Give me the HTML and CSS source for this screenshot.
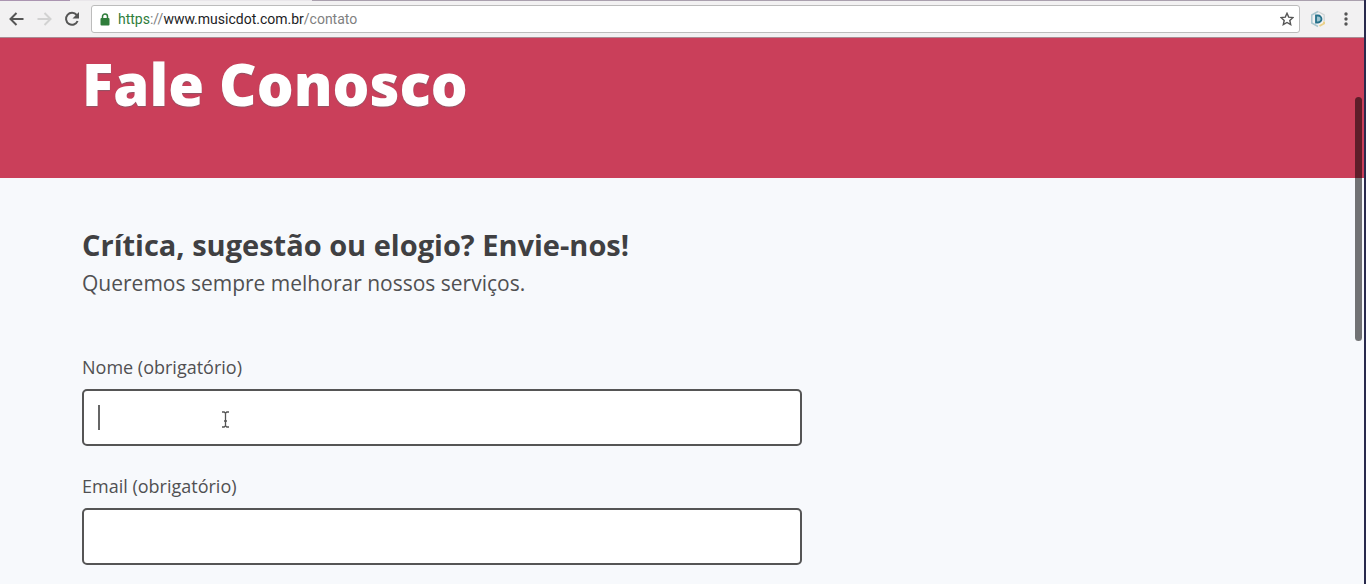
FILE: index.html
```html
<!DOCTYPE html>
<html lang="pt-BR">
<head>
<meta charset="utf-8">
<title>Fale Conosco</title>
<link rel="stylesheet" href="styles.css">
</head>
<body>
<div class="window">
  <div class="tabs"></div>
  <nav class="toolbar" aria-label="Navegador">
    <button class="tool" aria-label="Voltar"><svg width="16" height="16" viewBox="0 0 16 16"><path d="M15.500 8H2.500M8.500 2l-6 6 6 6" fill="none" stroke="#555" stroke-width="2"/></svg></button>
    <button class="tool" aria-label="Avançar" disabled><svg width="16" height="16" viewBox="0 0 16 16"><path d="M1.500 8h13M8.500 2l6 6-6 6" fill="none" stroke="#d2d2d2" stroke-width="2"/></svg></button>
    <button class="tool" aria-label="Recarregar"><svg width="16" height="16" viewBox="0 0 16 16"><path d="M12.700 4A6 6 0 1 0 13.600 10" fill="none" stroke="#555" stroke-width="2"/><path d="M15 1v6.500H8.500z" fill="#555"/></svg></button>
    <div class="address">
      <svg class="lock" width="10" height="13" viewBox="0 0 10 13"><rect x="0.500" y="5" width="9" height="7.500" rx="1" fill="#2f7d3b"/><path d="M2.500 5.500V3.500a2.500 2.500 0 0 1 5 0v2" fill="none" stroke="#2f7d3b" stroke-width="1.500"/></svg>
      <div class="url" role="textbox" aria-label="Endereço" contenteditable="true" spellcheck="false"><span class="scheme">https</span><span class="dim">://</span>www.musicdot.com.br<span class="dim">/contato</span></div>
      <button class="star" aria-label="Favoritar"><svg width="14" height="14" viewBox="0 0 14 14"><path d="M7 1.300l1.700 3.800 4.300.4-3.200 2.900.9 4.200L7 10.500l-3.700 2.100.9-4.200L1 5.500l4.300-.4z" fill="none" stroke="#555" stroke-width="1.400"/></svg></button>
    </div>
    <button class="tool" aria-label="Extensão"><svg width="16" height="18" viewBox="0 0 16 18"><path d="M8 1.500L1.800 5v8L8 16.500" fill="none" stroke="#a9c6ce" stroke-width="1.500"/><path d="M8 1.500L14.200 5v6" fill="none" stroke="#cfd5d6" stroke-width="1.300"/><path d="M14 11.500v2L9.500 16" fill="none" stroke="#ead18a" stroke-width="2"/><path d="M6 5.500h2a3.500 3.500 0 0 1 0 7H6z" fill="#9cc4cf" stroke="#25708a" stroke-width="1.800"/></svg></button>
    <button class="tool" aria-label="Menu"><svg width="16" height="16" viewBox="0 0 16 16" fill="#555"><circle cx="8" cy="3" r="1.700"/><circle cx="8" cy="8" r="1.700"/><circle cx="8" cy="13" r="1.700"/></svg></button>
  </nav>
  <header class="hero"><div class="container"><h1>Fale Conosco</h1></div></header>
  <main class="container content">
    <h2>Crítica, sugestão ou elogio? Envie-nos!</h2>
    <p class="lead">Queremos sempre melhorar nossos serviços.</p>
    <form class="form">
      <div class="field">
        <label for="nome">Nome (obrigatório)</label>
        <div class="control">
          <input id="nome" type="text" required>
          <span class="caret"></span>
          <svg class="pointer" width="9" height="17" viewBox="0 0 9 17"><path d="M1 1h2.200L4.500 2.300 5.800 1H8M4.500 2.300v12.400M1 16h2.200l1.300-1.300L5.800 16H8M3 10h3" fill="none" stroke="#555" stroke-width="1.300"/></svg>
        </div>
      </div>
      <div class="field">
        <label for="email">Email (obrigatório)</label>
        <div class="control"><input id="email" type="email" required></div>
      </div>
    </form>
  </main>
  <div class="scroll-thumb"></div>
</div>
</body>
</html>
```
FILE: styles.css
```css
* { box-sizing: border-box; }
body {
  margin: 0;
  background: #292a4d;
  font-family: "Open Sans", "Noto Sans", sans-serif;
  color: #404042;
}
.window {
  position: relative;
  min-height: 100vh;
  margin-right: 2px;
  overflow: hidden;
  background: #f7f9fc;
}
.tabs {
  height: 1px;
  background: linear-gradient(90deg, #ab95b1 70px, #e9e6ea 70px, #e9e6ea 312px, #aaa0ae 312px);
}
.toolbar {
  display: flex;
  align-items: center;
  gap: 12px;
  height: 37px;
  padding: 0 10px 0 8px;
  background: #f2f1f2;
  border-bottom: 1px solid #a98c94;
}
button {
  display: flex;
  padding: 0;
  border: 0;
  background: none;
}
.address {
  flex: 1;
  display: flex;
  align-items: center;
  height: 28px;
  margin-left: -1px;
  margin-right: -2px;
  padding: 0 5px 0 8px;
  background: #fff;
  border: 1px solid #bcbcbc;
  border-radius: 3px;
}
.url {
  flex: 1;
  margin-left: 8px;
  font: 14px/20px Roboto, sans-serif;
  color: #1c1c24;
  outline: 0;
}
.scheme { color: #2f7d3b; }
.dim { color: #808080; }
.hero {
  height: 140px;
  padding-top: 6px;
  background: #ca3f5a;
}
.container {
  max-width: 1200px;
  margin: 0 auto;
}
h1 {
  margin: 0;
  font-size: 58px;
  line-height: 80px;
  font-weight: 800;
  color: #fff;
  text-shadow: 0 1px 1px #8f5565;
}
.content { padding: 47px 0 18px; }
h2 {
  margin: 0;
  font-size: 29px;
  line-height: 40px;
  font-weight: 700;
}
.lead {
  margin: 0;
  font-size: 21px;
  line-height: 36px;
  color: #505052;
}
.form {
  display: grid;
  gap: 27px;
  width: 60%;
  margin-top: 53px;
}
label {
  display: block;
  margin-bottom: 9px;
  font-size: 18px;
  line-height: 26px;
  color: #505052;
}
.control { position: relative; }
input {
  display: block;
  width: 100%;
  height: 57px;
  padding: 0 15px;
  border: 2px solid #555;
  border-radius: 5px;
  background: #fff;
  font: inherit;
  outline: 0;
}
.caret {
  position: absolute;
  left: 16px;
  top: 16px;
  width: 2px;
  height: 25px;
  background: #666;
}
.pointer {
  position: absolute;
  left: 139px;
  top: 22px;
}
.scroll-thumb {
  position: absolute;
  top: 97px;
  right: 2px;
  width: 7px;
  height: 244px;
  border-radius: 4px;
  background: rgba(0, 0, 0, 0.54);
}
```
